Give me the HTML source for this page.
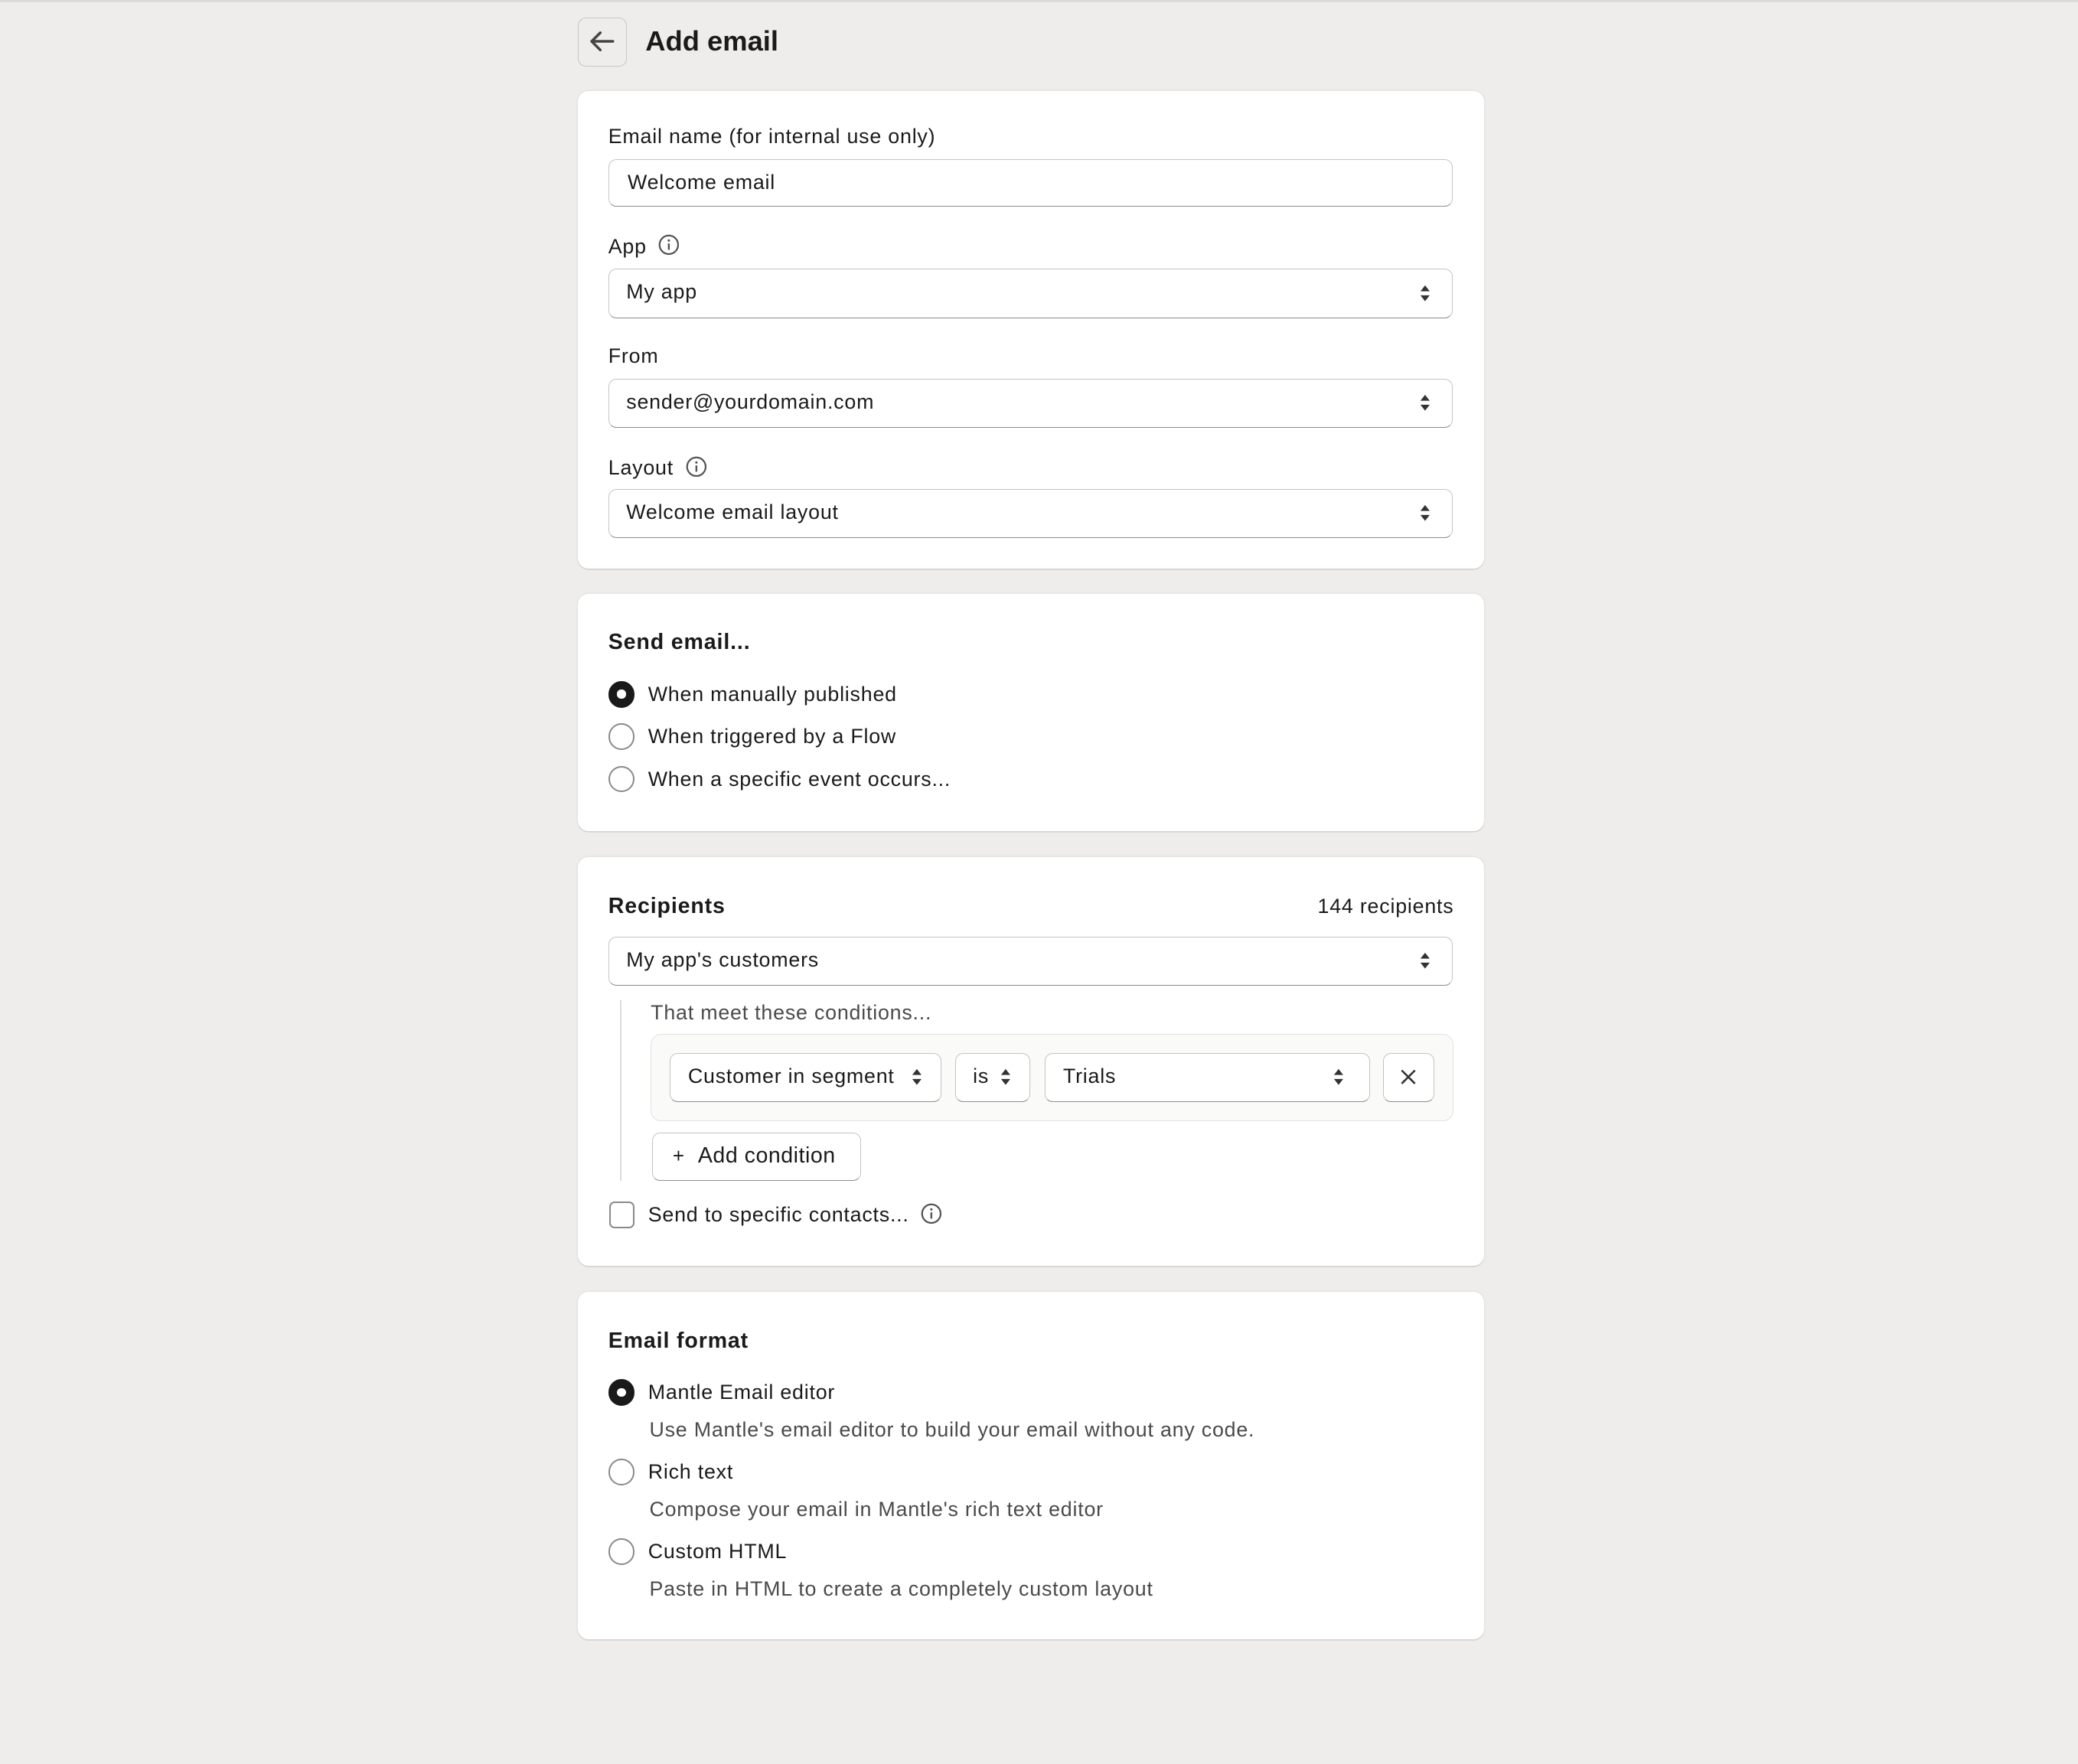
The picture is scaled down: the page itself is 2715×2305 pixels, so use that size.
<!DOCTYPE html>
<html><head><meta charset="utf-8"><style>
html,body{margin:0;padding:0}
body{width:1568px;height:1331px;background:#eeedeb;zoom:1.73151;font-family:"Liberation Sans",sans-serif;color:#1a1a1a;position:relative;overflow:hidden;letter-spacing:0.45px}
.a{position:absolute}
.card{position:absolute;left:436px;width:684px;background:#fff;border-radius:8px;box-shadow:0 1px 0 #d4d3d0,0 0 0 1px #e6e5e2}
.lbl{position:absolute;left:23px;font-size:15.5px;line-height:20px}
.inp{position:absolute;left:23px;width:637px;height:36px;border:1px solid #c4c3c0;border-bottom-color:#8e8e8e;border-radius:6px;box-sizing:border-box;font-size:15.5px;line-height:34px;padding-left:14px;background:#fff}
.sel{position:absolute;border:1px solid #c4c3c0;border-bottom-color:#8e8e8e;border-radius:6px;box-sizing:border-box;font-size:15.5px;line-height:34px;padding-left:13px;background:#fff;height:37px}
.arr{position:absolute;right:16px;top:11px;width:8px;height:13px}
.h{position:absolute;left:23px;font-size:16.5px;font-weight:bold;line-height:20px;letter-spacing:0.5px}
.radio{position:absolute;left:23px;width:20px;height:20px;border:1.3px solid #8a8a8a;border-radius:50%;box-sizing:border-box}
.radio.on{background:#1a1a1a;border-color:#1a1a1a}
.radio.on:after{content:"";position:absolute;left:5.5px;top:5.5px;width:6.5px;height:6.5px;background:#fff;border-radius:50%}
.rt{position:absolute;left:53px;font-size:15.5px;line-height:20px}
.ds{position:absolute;left:54px;font-size:15.5px;line-height:20px;color:#4a4a4a}
.info{display:inline-block;width:16px;height:16px;vertical-align:-2px;margin-left:9px}
</style></head><body>
<div class="a" style="left:0;top:0;width:1568px;height:2px;background:#dcdbd9"></div>
<svg style="display:none"><symbol id="ar" viewBox="0 0 8 13"><path d="M4 0.5L7.5 5H0.5Z M4 12.5L0.5 8H7.5Z" fill="#333"/></symbol>
<symbol id="inf" viewBox="0 0 16 16"><circle cx="8" cy="8" r="7" fill="none" stroke="#555" stroke-width="1.3"/><circle cx="8" cy="4.8" r="0.9" fill="#555"/><path d="M8 7v4.8" stroke="#555" stroke-width="1.4"/></symbol></svg>

<div class="a" style="left:436px;top:13px;width:37px;height:37px;border:1px solid #c8c6c2;border-radius:6px;box-sizing:border-box"><svg width="37" height="37" style="position:absolute;left:-1px;top:-1px"><path d="M27 18.5H11M17.5 12L11 18.5L17.5 25" fill="none" stroke="#444" stroke-width="2" stroke-linecap="round" stroke-linejoin="round"/></svg></div>
<div class="a" style="left:487px;top:18px;font-size:21px;font-weight:bold;line-height:26px;letter-spacing:0">Add email</div>

<div class="card" style="top:69px;height:360px">
<div class="lbl" style="top:24px">Email name (for internal use only)</div>
<div class="inp" style="top:51px">Welcome email</div>
<div class="lbl" style="top:107px">App<svg class="info"><use href="#inf"/></svg></div>
<div class="sel" style="left:23px;width:637px;top:134px">My app<svg class="arr"><use href="#ar"/></svg></div>
<div class="lbl" style="top:190px">From</div>
<div class="sel" style="left:23px;width:637px;top:217px">sender@yourdomain.com<svg class="arr"><use href="#ar"/></svg></div>
<div class="lbl" style="top:274px">Layout<svg class="info"><use href="#inf"/></svg></div>
<div class="sel" style="left:23px;width:637px;top:300px">Welcome email layout<svg class="arr"><use href="#ar"/></svg></div>
</div>

<div class="card" style="top:448px;height:179px">
<div class="h" style="top:27px">Send email...</div>
<div class="radio on" style="top:66px"></div><div class="rt" style="top:66px">When manually published</div>
<div class="radio" style="top:98px"></div><div class="rt" style="top:98px">When triggered by a Flow</div>
<div class="radio" style="top:130px"></div><div class="rt" style="top:130px">When a specific event occurs...</div>
</div>

<div class="card" style="top:647px;height:308px">
<div class="h" style="top:27px">Recipients</div>
<div class="a" style="right:23px;top:27px;font-size:15.5px;line-height:20px">144 recipients</div>
<div class="sel" style="left:23px;width:637px;top:60px">My app's customers<svg class="arr"><use href="#ar"/></svg></div>
<div class="a" style="left:32px;top:108px;width:1px;height:136px;background:#dddcd9"></div>
<div class="a" style="left:55px;top:107px;font-size:15.5px;line-height:20px;color:#4a4a4a">That meet these conditions...</div>
<div class="a" style="left:55px;top:133px;width:606px;height:66px;background:#fafaf9;border:1px solid #e3e2df;border-radius:8px;box-sizing:border-box">
 <div class="sel" style="left:14px;top:14px;width:205px">Customer in segment<svg class="arr" style="right:14px"><use href="#ar"/></svg></div>
 <div class="sel" style="left:229px;top:14px;width:57px">is<svg class="arr" style="right:14px"><use href="#ar"/></svg></div>
 <div class="sel" style="left:297px;top:14px;width:245px">Trials<svg class="arr" style="right:19px"><use href="#ar"/></svg></div>
 <div class="sel" style="left:552px;top:14px;width:39px;padding:0"><svg width="37" height="35"><path d="M13.5 12.5l10 10M23.5 12.5l-10 10" stroke="#333" stroke-width="1.5"/></svg></div>
</div>
<div class="sel" style="left:56px;top:208px;width:158px;height:36px;padding-left:15px;font-size:16.5px;line-height:34px;letter-spacing:0.3px"><span style="font-size:15px;margin-right:10px">+</span>Add condition</div>
<div class="a" style="left:24px;top:260px;width:19px;height:20px;border:1.3px solid #8a8a8a;border-radius:4px;box-sizing:border-box"></div>
<div class="rt" style="top:260px">Send to specific contacts...<svg class="info"><use href="#inf"/></svg></div>
</div>

<div class="card" style="top:975px;height:262px">
<div class="h" style="top:27px">Email format</div>
<div class="radio on" style="top:66px"></div><div class="rt" style="top:66px">Mantle Email editor</div>
<div class="ds" style="top:94px">Use Mantle's email editor to build your email without any code.</div>
<div class="radio" style="top:126px"></div><div class="rt" style="top:126px">Rich text</div>
<div class="ds" style="top:154px">Compose your email in Mantle's rich text editor</div>
<div class="radio" style="top:186px"></div><div class="rt" style="top:186px">Custom HTML</div>
<div class="ds" style="top:214px">Paste in HTML to create a completely custom layout</div>
</div>
</body></html>
